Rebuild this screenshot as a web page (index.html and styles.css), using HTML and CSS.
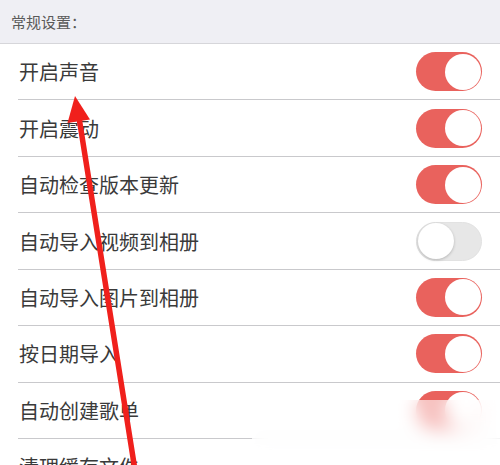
FILE: index.html
```html
<!DOCTYPE html>
<html lang="zh">
<head>
<meta charset="utf-8">
<link rel="stylesheet" href="styles.css">
</head>
<body>
<div class="page">
  <div class="section-head">常规设置：</div>
  <ul class="list">
    <li class="row"><span class="label">开启声音</span><span class="switch on"><span class="knob"></span></span></li>
    <li class="row"><span class="label">开启震动</span><span class="switch on"><span class="knob"></span></span></li>
    <li class="row"><span class="label">自动检查版本更新</span><span class="switch on"><span class="knob"></span></span></li>
    <li class="row"><span class="label">自动导入视频到相册</span><span class="switch off"><span class="knob"></span></span></li>
    <li class="row"><span class="label">自动导入图片到相册</span><span class="switch on"><span class="knob"></span></span></li>
    <li class="row"><span class="label">按日期导入</span><span class="switch on"><span class="knob"></span></span></li>
    <li class="row"><span class="label">自动创建歌单</span><span class="switch on"><span class="knob"></span></span></li>
    <li class="row"><span class="label">清理缓存文件</span></li>
  </ul>
  <div class="watermark"></div>
  <svg class="arrow" width="500" height="465" viewBox="0 0 500 465">
    <line x1="78.6" y1="115" x2="135" y2="470" stroke="#f0201c" stroke-width="5.5" stroke-linecap="round"/>
    <polygon points="75,96 67.5,123 90,119.5" fill="#f0201c"/>
  </svg>
</div>
</body>
</html>
```
FILE: styles.css
```css
* { box-sizing: border-box; }
html, body { margin: 0; padding: 0; background: #fff; }
body {
  font-family: "Noto Sans CJK SC", "Noto Sans", sans-serif;
  width: 500px;
  height: 465px;
  overflow: hidden;
}
.page {
  position: relative;
  width: 500px;
  height: 465px;
  overflow: hidden;
}
.section-head {
  height: 44px;
  background: #efeff4;
  border-bottom: 1px solid #d6d6da;
  padding-left: 11px;
  display: flex;
  align-items: center;
  font-size: 15px;
  color: #5a5a5a;
}
.list {
  list-style: none;
  margin: 0;
  padding: 0;
}
.row {
  height: 56.45px;
  margin-left: 18px;
  padding-left: 1px;
  padding-right: 18px;
  border-bottom: 1px solid #c9c9cc;
  display: flex;
  align-items: center;
  justify-content: space-between;
}
.label {
  font-size: 20px;
  color: #3a3a3a;
  letter-spacing: 0;
}
.switch {
  width: 66px;
  height: 39px;
  border-radius: 20px;
  padding: 1.5px;
  display: flex;
}
.switch .knob {
  width: 36px;
  height: 36px;
  border-radius: 50%;
  background: #fff;
}
.switch.on {
  background: #e9625d;
  justify-content: flex-end;
}
.switch.off {
  background: #e7e7e7;
  border: 1px solid #e2e2e2;
  padding: 0.5px;
  justify-content: flex-start;
}
.switch.off .knob {
  box-shadow: 0 1px 3px rgba(0,0,0,0.22);
}
.watermark {
  position: absolute;
  left: 252px;
  top: 400px;
  right: 0;
  bottom: 0;
  background: rgba(255,255,255,0.6);
  backdrop-filter: blur(9px);
  -webkit-backdrop-filter: blur(9px);
}
.arrow {
  position: absolute;
  left: 0;
  top: 0;
  pointer-events: none;
}
```
